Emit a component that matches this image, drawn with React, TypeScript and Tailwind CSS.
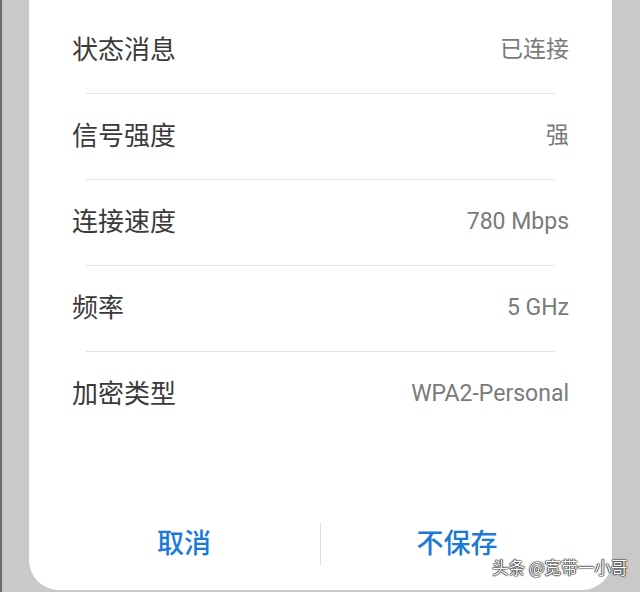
import React from "react";

const rows = [
  { label: "状态消息", value: "已连接" },
  { label: "信号强度", value: "强" },
  { label: "连接速度", value: "780 Mbps" },
  { label: "频率", value: "5 GHz" },
  { label: "加密类型", value: "WPA2-Personal" },
];

const App = () => {
  return (
    <div className="relative w-[640px] h-[592px] overflow-hidden bg-[#c9c9c9] font-['Roboto','Noto_Sans_CJK_SC',sans-serif]">
      <div className="absolute left-0 top-0 h-full w-[2px] bg-[#6b6b6b]" />
      <div className="ml-[29px] w-[583px] h-[590px] bg-white rounded-b-[30px] flex flex-col">
        <div className="pt-[8px]">
          {rows.map((row, i) => (
            <div key={row.label}>
              <div className="h-[85px] flex items-center justify-between px-[43px]">
                <span className="text-[26px] text-[#3a3a3a]">{row.label}</span>
                <span className="text-[23px] text-[#7a7a7a]">{row.value}</span>
              </div>
              {i < rows.length - 1 && (
                <div className="mx-[57px] h-px bg-[#e3e3e3]" />
              )}
            </div>
          ))}
        </div>
        <div className="mt-[85px] flex items-center h-[44px] px-[19px]">
          <div className="flex-1 flex justify-center">
            <span className="text-[27px] font-medium text-[#1b7ad6]">取消</span>
          </div>
          <div className="w-px h-[42px] bg-[#dddddd]" />
          <div className="flex-1 flex justify-center">
            <span className="text-[27px] font-medium text-[#1b7ad6]">不保存</span>
          </div>
        </div>
      </div>
      <div className="absolute left-[492px] top-[555px] text-[16.6px] text-white font-['Noto_Sans_CJK_SC',sans-serif] [text-shadow:0_0_1px_#111,0_0_1px_#111,0_0_2px_#333,0_0_1px_#111]">
        头条 @宽带一小哥
      </div>
    </div>
  );
};

export default App;
